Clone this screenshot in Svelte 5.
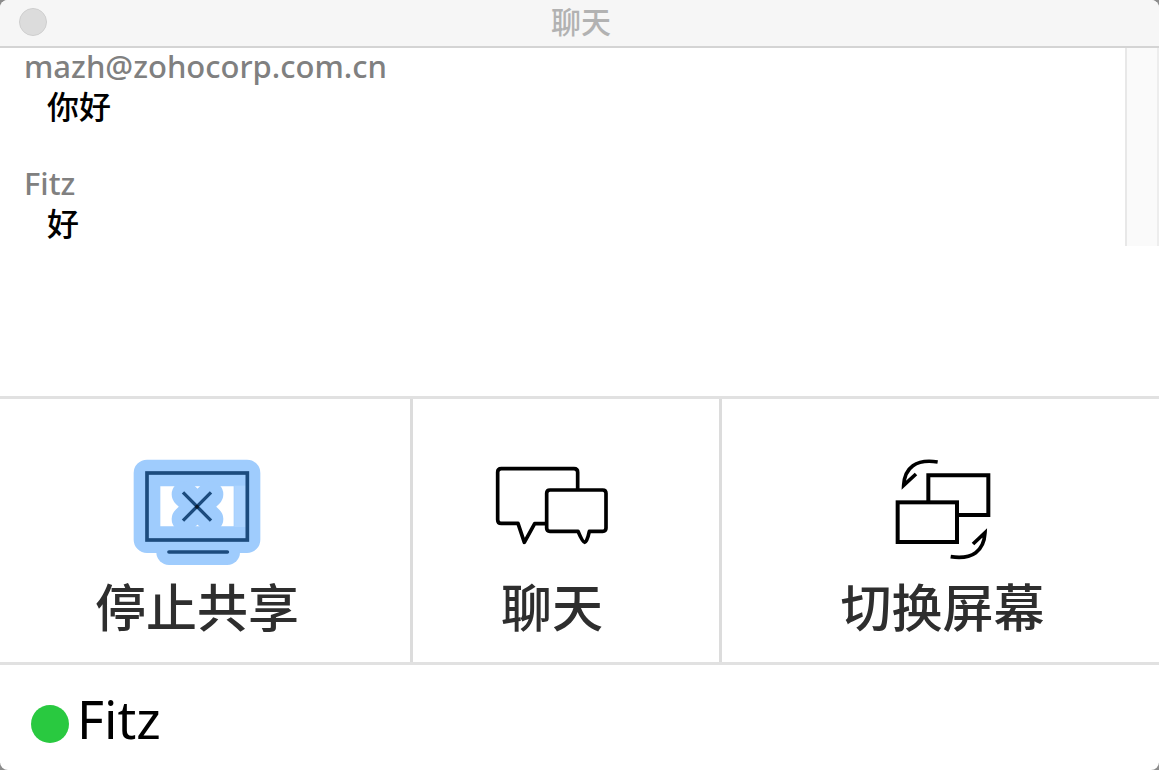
<script>
  let messages = [
    { from: "mazh@zohocorp.com.cn", text: "你好" },
    { from: "Fitz", text: "好" },
  ];
  let draft = "";
  let user = "Fitz";
</script>

<div class="window">
  <header>
    <button class="close" aria-label="关闭"></button>
    <h1>聊天</h1>
  </header>

  <div class="log">
    <ul class="messages">
      {#each messages as message}
        <li>
          <span class="from">{message.from}</span>
          <p>{message.text}</p>
        </li>
      {/each}
    </ul>
    <div class="track"></div>
  </div>

  <textarea aria-label="消息" bind:value={draft}></textarea>

  <nav class="toolbar">
    <button class="stop">
      <svg viewBox="159 57 384 318" width="128" height="106" aria-hidden="true">
        <g fill="none" stroke="#9fccfd" stroke-linejoin="round" stroke-linecap="round">
          <rect x="201" y="99" width="300" height="200" stroke-width="80" />
          <path d="M267 337H442" stroke-width="76" />
          <path d="M314 163L391 237M391 163L314 237" stroke-width="78" />
        </g>
        <path d="M463 137h34v124h-34z" fill="#add4ff" />
        <g fill="none" stroke="#1c4b7d" stroke-width="11">
          <rect x="201" y="99" width="301" height="201" />
          <path d="M267 336H442" stroke-linecap="round" />
          <path d="M309 157L393 242M393 157L309 242" stroke-width="10" />
        </g>
        <circle cx="351" cy="200" r="6" fill="#0a1a2c" />
      </svg>
      <span>停止共享</span>
    </button>

    <button class="chat">
      <svg viewBox="78 57 342 318" width="114" height="106" aria-hidden="true">
        <g fill="none" stroke="#000" stroke-width="11" stroke-linejoin="round">
          <path
            d="M326 148V97Q326 86 315 86H97Q86 86 86 97V239Q86 250 97 250H147L166 307L197 251H230"
          />
          <path
            d="M243 150H401Q411 150 411 160V264Q411 274 401 274H361Q354 307 347 307Q341 307 327 274H243Q233 274 233 264V160Q233 150 243 150Z"
          />
        </g>
      </svg>
      <span>聊天</span>
    </button>

    <button class="switch">
      <svg viewBox="195 57 288 318" width="96" height="106" aria-hidden="true">
        <g fill="none" stroke="#000" stroke-width="12">
          <path d="M295 187V106H475V225H382" />
          <rect x="203" y="187" width="178" height="119" />
          <path d="M323 66C258 56 224 82 221 136L258 102" stroke-width="11" />
          <path d="M362 350C428 360 462 332 465 278L429 312" stroke-width="11" />
        </g>
      </svg>
      <span>切换屏幕</span>
    </button>
  </nav>

  <footer>
    <span class="status"></span>
    <span>{user}</span>
  </footer>
</div>

<style>
  :global(body) {
    margin: 0;
    background: #8c8c8c;
    font-family: "Noto Sans", "Noto Sans CJK SC", sans-serif;
    font-weight: 500;
  }

  .window {
    display: flex;
    flex-direction: column;
    min-height: 100vh;
    border-radius: 8px;
    overflow: hidden;
    background: #fff;
  }

  header {
    display: grid;
    grid-template-columns: 28px 1fr 28px;
    align-items: center;
    padding: 0 16px 2px 19px;
    height: 44px;
    background: #f6f6f6;
    border-bottom: 2px solid #d4d4d4;
  }
  h1 {
    margin: 0;
    font-size: 30px;
    line-height: 44px;
    font-weight: 500;
    text-align: center;
    color: #b2b2b2;
  }
  .close {
    width: 28px;
    height: 28px;
    padding: 0;
    border: 1px solid #cecece;
    border-radius: 50%;
    background: #dcdcdc;
  }

  .log {
    display: flex;
    height: 198px;
  }
  .messages {
    flex: 1;
    margin: 0;
    padding: 0 24px;
    list-style: none;
  }
  .messages li {
    margin-bottom: 36px;
  }
  .from {
    display: block;
    font-size: 31px;
    line-height: 37px;
    color: #808080;
  }
  .messages p {
    margin: 0;
    padding-left: 23px;
    font-size: 32px;
    line-height: 44px;
    color: #000;
  }
  .track {
    width: 30px;
    border-left: 2px solid #e8e8e8;
    border-right: 2px solid #ededed;
    background: #fafafa;
  }

  textarea {
    flex: 1;
    min-height: 80px;
    padding: 8px 24px;
    border: 0;
    outline: 0;
    resize: none;
    font: inherit;
    font-size: 32px;
  }

  .toolbar {
    display: grid;
    grid-template-columns: 413fr 309fr 437fr;
    border-top: 3px solid #e1e1e1;
    border-bottom: 3px solid #e1e1e1;
  }
  .toolbar button {
    display: flex;
    flex-direction: column;
    align-items: center;
    gap: 4px;
    padding: 60px 0 17px;
    border: 0;
    border-right: 3px solid #dcdcdc;
    background: none;
    font-family: inherit;
    font-size: 51px;
    font-weight: 500;
    line-height: 76px;
    color: #2e2e2e;
  }
  .toolbar .stop {
    padding-right: 16px;
  }
  .toolbar .chat {
    padding-right: 28px;
  }
  .toolbar .switch {
    padding-left: 4px;
    border-right: 0;
  }

  footer {
    display: flex;
    align-items: center;
    gap: 8px;
    height: 105px;
    padding: 2px 0 0 31px;
    box-sizing: border-box;
    font-size: 52px;
    font-weight: 400;
    line-height: 64px;
    color: #000;
  }
  .status {
    width: 38px;
    height: 38px;
    margin-top: 10px;
    border-radius: 50%;
    background: #29c940;
  }
</style>
